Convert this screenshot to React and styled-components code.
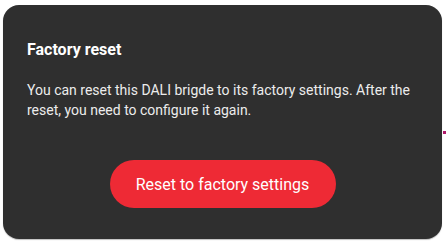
import React from 'react';
import styled, { createGlobalStyle } from 'styled-components';

const GlobalStyle = createGlobalStyle`
  html, body {
    margin: 0;
    padding: 0;
    background: #ffffff;
    font-family: Roboto, "Liberation Sans", Arial, sans-serif;
  }
`;

const Page = styled.div`
  position: relative;
  width: 446px;
  height: 244px;
  padding: 5px 4px 5px 3px;
  box-sizing: border-box;
`;

const Card = styled.section`
  height: 100%;
  box-sizing: border-box;
  background: #2f2f2f;
  border-radius: 16px;
  box-shadow: 0 1px 1px rgba(0, 0, 0, 0.25);
  padding: 35px 24px 0;
  display: flex;
  flex-direction: column;
  color: #f2f2f2;
`;

const Title = styled.h2`
  margin: 0;
  font-size: 16px;
  line-height: 20px;
  font-weight: 700;
  color: #ffffff;
`;

const Text = styled.p`
  margin: 20px 0 0;
  font-size: 14px;
  line-height: 20px;
  color: #ececec;
`;

const Actions = styled.div`
  display: flex;
  justify-content: center;
  margin-top: 40px;
`;

const Button = styled.button`
  width: 226px;
  height: 48px;
  border: none;
  border-radius: 24px;
  background: #ee2a35;
  color: #ffffff;
  font-family: inherit;
  font-size: 16px;
  cursor: pointer;
`;

const Marker = styled.span`
  position: absolute;
  left: 443px;
  top: 131px;
  width: 3px;
  height: 3px;
  background: #b0186a;
`;

export default function App() {
  return (
    <>
      <GlobalStyle />
      <Page>
        <Card>
          <Title>Factory reset</Title>
          <Text>
            You can reset this DALI brigde to its factory settings. After the reset, you need to configure it again.
          </Text>
          <Actions>
            <Button>Reset to factory settings</Button>
          </Actions>
        </Card>
        <Marker />
      </Page>
    </>
  );
}
